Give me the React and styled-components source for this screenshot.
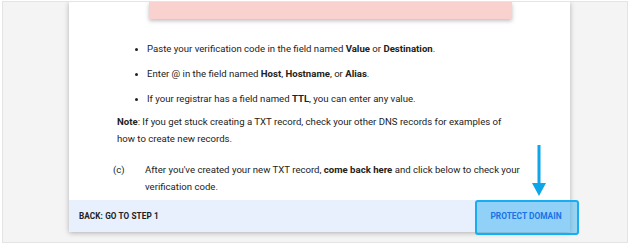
import React from "react";
import styled, { createGlobalStyle } from "styled-components";

const Global = createGlobalStyle`
  html, body { margin: 0; padding: 0; background: #ffffff; }
  body { font-family: Roboto, "Liberation Sans", Arial, sans-serif; }
`;

const Frame = styled.div`
  position: relative;
  box-sizing: border-box;
  margin: 1px 2px 0 2px;
  width: 626px;
  height: 242px;
  border: 1px solid #e4e4e4;
  background: #f4f4f4;
  overflow: hidden;
  display: flex;
  padding-left: 66px;
`;

const Card = styled.div`
  width: 501px;
  height: 230px;
  display: flex;
  flex-direction: column;
  background: #ffffff;
  box-shadow: 0 1px 5px rgba(0, 0, 0, 0.28);
`;

const Body = styled.div`
  flex: 1;
  padding: 0 46px 0 44px;
  color: #222;
  font-size: 9.6px;
  line-height: 17px;
`;

const PinkBox = styled.div`
  height: 17px;
  margin: 0 12px 0 36px;
  background: #f9d2cf;
  box-shadow: 0 2px 4px rgba(0, 0, 0, 0.25);
`;

const BulletList = styled.ul`
  margin: 21px 0 0 0;
  padding: 0 0 0 34px;
  list-style: disc;
`;

const Bullet = styled.li`
  margin-bottom: 8px;
  &:last-child { margin-bottom: 6px; }
  &::marker { font-size: 9px; }
`;

const Note = styled.p`
  margin: 6px 6px 0 4px;
`;

const Step = styled.div`
  display: flex;
  margin: 14px 0 0 0;
`;

const StepLabel = styled.span`
  width: 32px;
  flex: none;
`;

const Footer = styled.div`
  position: relative;
  height: 32px;
  background: #e8f0fe;
  display: flex;
  align-items: center;
  justify-content: space-between;
  padding-left: 10px;
`;

const BackButton = styled.span`
  font-size: 8.2px;
  font-weight: 700;
  color: #202124;
  letter-spacing: 0.1px;
`;

const ProtectButton = styled.span`
  position: relative;
  display: flex;
  align-items: center;
  justify-content: center;
  box-sizing: border-box;
  width: 96px;
  height: 32px;
  padding-left: 8px;
  font-size: 8.4px;
  font-weight: 700;
  color: #1a73e8;
  z-index: 0;
  &::before {
    content: "";
    position: absolute;
    left: 1px;
    right: -9px;
    top: 0;
    bottom: -3px;
    border: 2px solid #16aef0;
    border-radius: 3px;
    background: rgba(40, 170, 240, 0.45);
    z-index: -1;
  }
`;

const Arrow = styled.svg`
  position: absolute;
  left: 528px;
  top: 143px;
`;

export default function App() {
  return (
    <>
      <Global />
      <Frame>
        <Card>
          <Body>
            <PinkBox />
            <BulletList>
              <Bullet>
                Paste your verification code in the field named <b>Value</b> or <b>Destination</b>.
              </Bullet>
              <Bullet>
                Enter @ in the field named <b>Host</b>, <b>Hostname</b>, or <b>Alias</b>.
              </Bullet>
              <Bullet>
                If your registrar has a field named <b>TTL</b>, you can enter any value.
              </Bullet>
            </BulletList>
            <Note>
              <b>Note</b>: If you get stuck creating a TXT record, check your other DNS records for examples of
              how to create new records.
            </Note>
            <Step>
              <StepLabel>(c)</StepLabel>
              <span>
                After you've created your new TXT record, <b>come back here</b> and click below to check your
                verification code.
              </span>
            </Step>
          </Body>
          <Footer>
            <BackButton>BACK: GO TO STEP 1</BackButton>
            <ProtectButton>PROTECT DOMAIN</ProtectButton>
          </Footer>
        </Card>
        <Arrow width="16" height="52" viewBox="0 0 16 52">
          <rect x="6.5" y="0" width="3" height="40" fill="#0ea5e9" />
          <polygon points="1,38 15,38 8,51" fill="#0ea5e9" />
        </Arrow>
      </Frame>
    </>
  );
}
